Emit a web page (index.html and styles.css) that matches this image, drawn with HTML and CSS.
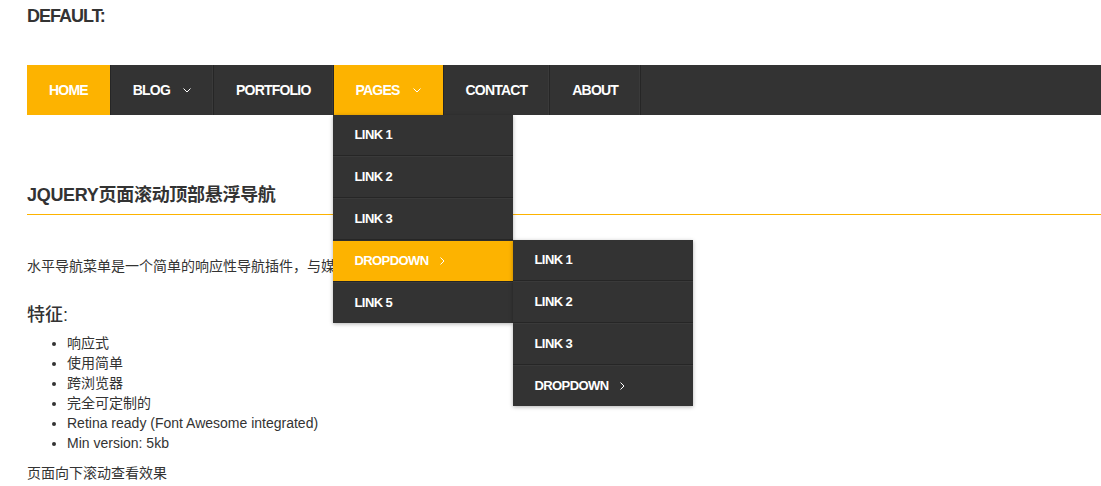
FILE: index.html
```html
<!DOCTYPE html>
<html lang="zh">
<head>
<meta charset="utf-8">
<title>jQuery页面滚动顶部悬浮导航</title>
<link rel="stylesheet" href="styles.css">
</head>
<body>
<div class="page">
  <h2 class="default-title">DEFAULT:</h2>
  <nav class="menu">
    <ul class="menu-list">
      <li class="menu-item active"><a href="#">HOME</a></li>
      <li class="menu-item"><a href="#">BLOG<svg class="chev" viewBox="0 0 8 5" width="8" height="5"><path d="M0.5 0.5 L4 4 L7.5 0.5" /></svg></a></li>
      <li class="menu-item"><a href="#">PORTFOLIO</a></li>
      <li class="menu-item active has-drop"><a href="#">PAGES<svg class="chev" viewBox="0 0 8 5" width="8" height="5"><path d="M0.5 0.5 L4 4 L7.5 0.5" /></svg></a>
        <ul class="drop">
          <li><a href="#">LINK 1</a></li>
          <li><a href="#">LINK 2</a></li>
          <li><a href="#">LINK 3</a></li>
          <li class="active sub-host"><a href="#">DROPDOWN<svg class="chev-r" viewBox="0 0 5 8" width="5" height="8"><path d="M0.5 0.5 L4 4 L0.5 7.5" /></svg></a>
            <ul class="drop sub">
              <li><a href="#">LINK 1</a></li>
              <li><a href="#">LINK 2</a></li>
              <li><a href="#">LINK 3</a></li>
              <li><a href="#">DROPDOWN<svg class="chev-r" viewBox="0 0 5 8" width="5" height="8"><path d="M0.5 0.5 L4 4 L0.5 7.5" /></svg></a></li>
            </ul>
          </li>
          <li><a href="#">LINK 5</a></li>
        </ul>
      </li>
      <li class="menu-item"><a href="#">CONTACT</a></li>
      <li class="menu-item"><a href="#">ABOUT</a></li>
    </ul>
  </nav>
  <h2 class="section-title">JQUERY页面滚动顶部悬浮导航</h2>
  <p class="intro">水平导航菜单是一个简单的响应性导航插件，与媒体查询结合</p>
  <h3 class="features-title">特征:</h3>
  <ul class="features">
    <li>响应式</li>
    <li>使用简单</li>
    <li>跨浏览器</li>
    <li>完全可定制的</li>
    <li>Retina ready (Font Awesome integrated)</li>
    <li>Min version: 5kb</li>
  </ul>
  <p class="note">页面向下滚动查看效果</p>
</div>
</body>
</html>
```
FILE: styles.css
```css
* { box-sizing: border-box; }
html, body {
  margin: 0;
  padding: 0;
  background: #fff;
  overflow: hidden;
}
body {
  font-family: "Liberation Sans", Arial, "Noto Sans CJK SC", sans-serif;
  color: #333;
  font-size: 14px;
}
.page {
  padding-left: 27px;
  width: 1300px;
}
.default-title {
  margin: 0;
  padding-top: 5px;
  font-size: 18px;
  line-height: 22px;
  font-weight: bold;
  letter-spacing: -1px;
  color: #333;
}
.menu {
  margin-top: 38px;
  height: 50px;
  background: #333;
}
.menu-list {
  list-style: none;
  margin: 0;
  padding: 0;
  display: flex;
  height: 50px;
}
.menu-item {
  position: relative;
  border-right: 1px solid #262626;
  box-shadow: inset -1px 0 0 #3a3a3a;
}
.menu-item > a {
  display: flex;
  align-items: center;
  height: 50px;
  padding: 0 22px;
  color: #fff;
  text-decoration: none;
  font-size: 14px;
  font-weight: bold;
  letter-spacing: -0.8px;
}
.menu-item.active {
  background: #fdb300;
  box-shadow: none;
}
.chev {
  margin-left: 13px;
  fill: none;
  stroke: #fff;
  stroke-width: 1;
}
.chev-r {
  margin-left: 12px;
  fill: none;
  stroke: #fff;
  stroke-width: 1;
}
.drop {
  position: absolute;
  top: 50px;
  left: -1px;
  width: 180px;
  margin: 0;
  padding: 0;
  list-style: none;
  background: #333;
  box-shadow: 0 1px 4px rgba(0, 0, 0, 0.3);
  z-index: 5;
}
.drop li {
  position: relative;
}
.drop li + li {
  border-top: 1px solid #262626;
}
.drop li a {
  display: flex;
  align-items: center;
  height: 40px;
  padding: 0 22px 1px;
  color: #fff;
  text-decoration: none;
  font-size: 13px;
  font-weight: bold;
  letter-spacing: -0.6px;
}
.drop li + li > a {
  height: 41px;
  border-top: 1px solid #3a3a3a;
}
.drop li.active {
  background: #fdb300;
}
.drop li.active > a {
  border-top-color: #2e2e2e;
}
.drop.sub {
  top: 0;
  left: 180px;
}
.section-title {
  margin: 68px 0 0;
  padding-bottom: 7px;
  font-size: 18px;
  line-height: 24px;
  font-weight: bold;
  letter-spacing: -0.3px;
  border-bottom: 1px solid #fdb300;
  color: #333;
}
.intro {
  margin: 41px 0 0;
  line-height: 20px;
  font-size: 14px;
}
.features-title {
  margin: 27px 0 0;
  font-size: 18px;
  line-height: 24px;
  font-weight: 500;
}
.features {
  margin: 6px 0 0;
  padding-left: 40px;
  line-height: 20px;
  font-size: 14px;
}
.note {
  margin: 10px 0 0;
  line-height: 20px;
  font-size: 14px;
}
```
